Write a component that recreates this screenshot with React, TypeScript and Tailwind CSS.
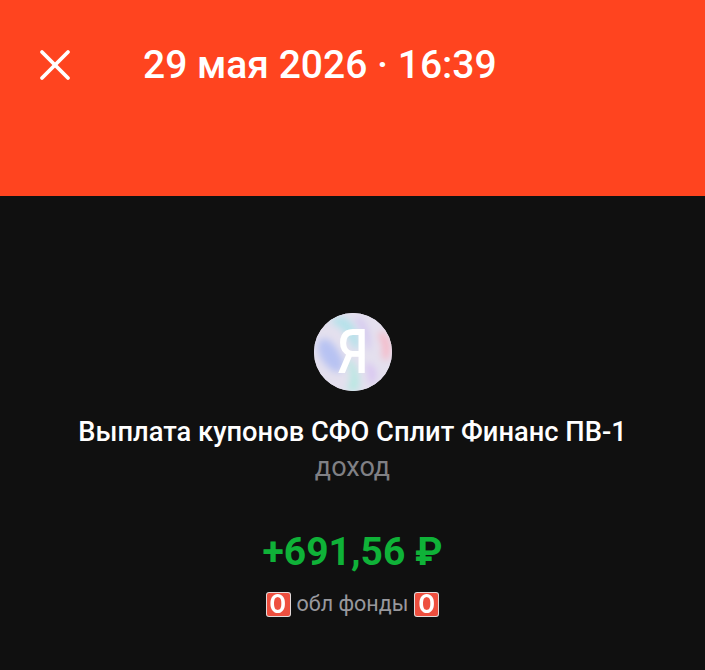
import React from 'react';
import { X } from 'lucide-react';

const BadgeO: React.FC = () => (
  <span className="flex items-center justify-center w-[25px] h-[25px] rounded-[3px] bg-[#e3dada] p-[1px]">
    <span className="flex items-center justify-center w-full h-full rounded-[2px] bg-[#ee4f3f] text-white text-[25px] font-bold leading-none font-['Roboto',sans-serif]">
      <span className="scale-x-95">O</span>
    </span>
  </span>
);

const Avatar: React.FC = () => (
  <div className="relative w-[78px] h-[78px] rounded-full overflow-hidden bg-[#e6e2f0]">
    <svg viewBox="0 0 78 78" className="absolute inset-0 w-full h-full">
      <defs>
        <filter id="soft" x="-30%" y="-30%" width="160%" height="160%">
          <feGaussianBlur stdDeviation="3.5" />
        </filter>
      </defs>
      <rect width="78" height="78" fill="#e4e0ee" />
      <g filter="url(#soft)">
        <path d="M4 30 C12 18 24 34 30 50 L26 60 C14 58 2 44 4 30Z" fill="#b7c2f2" />
        <path d="M22 4 C34 2 44 12 46 34 L40 36 C34 22 28 12 16 10Z" fill="#b4e2ea" />
        <path d="M46 4 C54 12 58 24 56 38 L52 34 C50 22 46 12 40 6Z" fill="#d4c8f0" />
        <path d="M68 18 C78 26 78 38 73 48 L68 44 C70 36 68 28 64 22Z" fill="#f7b8c6" />
        <path d="M36 46 C42 52 48 64 44 78 L32 78 C38 68 38 56 32 50Z" fill="#b8e8e2" />
        <path d="M54 50 C62 54 64 60 60 70 L54 70 C56 62 54 56 50 54Z" fill="#d8c4f2" />
      </g>
    </svg>
    <span className="absolute inset-0 flex items-center justify-center text-white text-[62px] font-medium leading-none scale-x-[0.8] font-['Roboto',sans-serif]">
      Я
    </span>
  </div>
);

export default function App() {
  return (
    <div className="w-[705px] h-[670px] flex flex-col bg-[#101010] overflow-hidden font-['Roboto',sans-serif]">
      <div className="h-[196px] shrink-0 bg-[#ff441f] flex items-start pt-[41px] pl-[29px] text-white">
        <X size={52} strokeWidth={3.8} absoluteStrokeWidth className="-mt-[2px] mr-[62px]" />
        <span className="text-[39px] leading-[48px] font-medium">29 мая 2026 · 16:39</span>
      </div>
      <div className="flex flex-col items-center pt-[117px]">
        <Avatar />
        <div className="mt-[23px] text-white text-[27.3px] leading-[36px] font-medium">
          Выплата купонов СФО Сплит Финанс ПВ-1
        </div>
        <div className="mt-[1px] text-[#808085] text-[27px] leading-[32px]">доход</div>
        <div className="mt-[45px] text-[#0fb238] text-[39px] leading-[48px] font-bold">+691,56 ₽</div>
        <div className="mt-[13px] flex items-center gap-[6px] text-[#98989d] text-[21.5px] leading-[30px]">
          <BadgeO />
          <span>обл фонды</span>
          <BadgeO />
        </div>
      </div>
    </div>
  );
}
